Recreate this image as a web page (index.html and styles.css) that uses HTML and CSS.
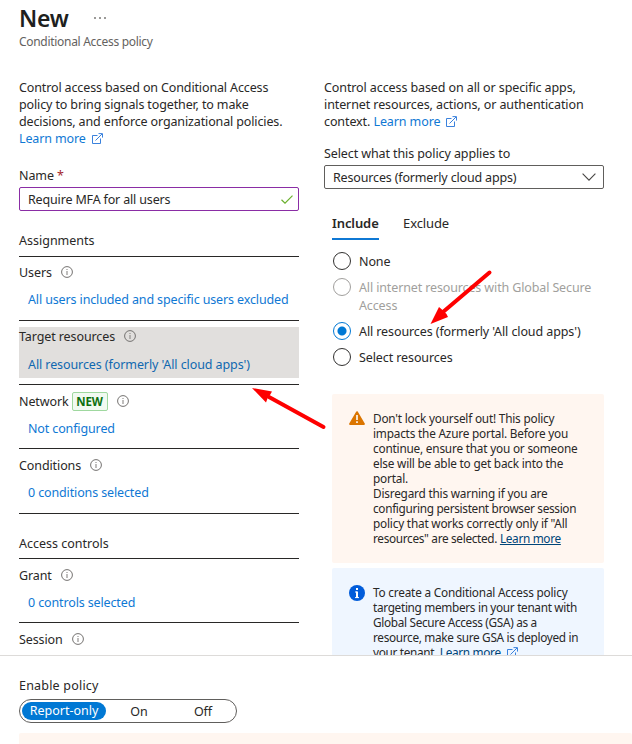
FILE: index.html
```html
<!DOCTYPE html>
<html lang="en">
<head>
<meta charset="utf-8">
<title>New - Conditional Access policy</title>
<link rel="stylesheet" href="styles.css">
</head>
<body>
<svg class="defs" width="0" height="0">
  <symbol id="info" viewBox="0 0 12 12"><circle cx="6" cy="6" r="5.4" fill="none" stroke="#747270" stroke-width="1"/><path d="M6 5v4M6 3v1.1" stroke="#8a8886" stroke-width="1.1"/></symbol>
  <symbol id="ext" viewBox="0 0 11 11"><path d="M5.5 2.5h-5v8h8v-5M3.5 7.5 10 1M6.5 .6h4v4" fill="none" stroke="#3b82dd" stroke-width="1"/></symbol>
</svg>
<div class="page">
  <header class="header">
    <div class="title-row"><h1>New</h1><span class="dots"><i></i><i></i><i></i></span></div>
    <div class="subtitle">Conditional Access policy</div>
  </header>
  <main class="columns">
    <section class="left">
      <p class="intro">Control access based on Conditional Access<br>policy to bring signals together, to make<br>decisions, and enforce organizational policies.<br><a>Learn more</a><svg class="ext"><use href="#ext"/></svg></p>
      <div class="label name-label">Name <span class="req">*</span></div>
      <div class="input"><span>Require MFA for all users</span><svg width="12" height="9" viewBox="0 0 12 9"><path d="M.5 4.8 4 8.2 11.5.7" fill="none" stroke="#6bb02e" stroke-width="1.2"/></svg></div>
      <h2>Assignments</h2>
      <div class="row first"><div class="head">Users<svg class="info"><use href="#info"/></svg></div><a>All users included and specific users excluded</a></div>
      <div class="row active"><div class="fill"><div class="head">Target resources<svg class="info"><use href="#info"/></svg></div><a>All resources (formerly 'All cloud apps')</a></div></div>
      <div class="row"><div class="head">Network<b class="new">NEW</b><svg class="info"><use href="#info"/></svg></div><a>Not configured</a></div>
      <div class="row last"><div class="head">Conditions<svg class="info"><use href="#info"/></svg></div><a>0 conditions selected</a></div>
      <h2 class="controls">Access controls</h2>
      <div class="row"><div class="head">Grant<svg class="info"><use href="#info"/></svg></div><a>0 controls selected</a></div>
      <div class="row"><div class="head">Session<svg class="info"><use href="#info"/></svg></div></div>
    </section>
    <section class="right">
      <p class="intro">Control access based on all or specific apps,<br>internet resources, actions, or authentication<br>context. <a>Learn more</a><svg class="ext"><use href="#ext"/></svg></p>
      <div class="label select-label">Select what this policy applies to</div>
      <div class="select"><span>Resources (formerly cloud apps)</span><svg width="14" height="8" viewBox="0 0 14 8"><path d="M.6.7 7 7.1 13.4.7" fill="none" stroke="#484644" stroke-width="1.1"/></svg></div>
      <div class="tabs"><div class="tab on">Include</div><div class="tab">Exclude</div></div>
      <div class="radios">
        <div class="radio"><i></i><span>None</span></div>
        <div class="radio off"><i></i><span>All internet resources with Global Secure<br>Access</span></div>
        <div class="radio on"><i></i><span>All resources (formerly 'All cloud apps')</span></div>
        <div class="radio"><i></i><span>Select resources</span></div>
      </div>
      <div class="notice warn">
        <svg width="16" height="14" viewBox="0 0 16 14"><path d="M8 1.2 14.9 13H1.1z" fill="#db7500" stroke="#db7500" stroke-width="2" stroke-linejoin="round"/><path d="M8 4v5M8 10.3v1.7" stroke="#fff" stroke-width="1.6"/></svg>
        <p>Don't lock yourself out! This policy<br>impacts the Azure portal. Before you<br>continue, ensure that you or someone<br>else will be able to get back into the<br>portal.<br>Disregard this warning if you are<br><span class="tight">configuring persistent browser session</span><br>policy that works correctly only if "All<br><span class="tight">resources" are selected. <a>Learn more</a></span></p>
      </div>
      <div class="notice note">
        <svg width="16" height="16" viewBox="0 0 16 16"><circle cx="8" cy="8" r="8" fill="#015cda"/><path d="M8 6.5V13M8 3v2" stroke="#fff" stroke-width="2"/><path d="M6 7h2M6 12.6h4" stroke="#fff" stroke-width="1"/></svg>
        <p>To create a Conditional Access policy<br><span class="tight">targeting members in your tenant with<br>Global Secure Access (GSA) as a<br>resource, make sure GSA is deployed in<br>your tenant. <a>Learn more</a></span><svg class="ext"><use href="#ext"/></svg></p>
      </div>
    </section>
    <svg class="arrows" width="632" height="400" viewBox="0 70 632 400"><path d="M489.500 272.500 443 312M323.500 427 269 397" stroke="#fe0000" stroke-width="4" stroke-linecap="round"/><path d="M430.500 324l8.500-17 3.500 3 4 4 1.500 3zM252 388l20 3.500-2 3.500-2.500 3.500-1.500 4z" fill="#fe0000"/></svg>
  </main>
  <footer class="footer">
    <div class="label enable">Enable policy</div>
    <div class="toggle"><span class="sel">Report-only</span><span class="t-on">On</span><span class="t-off">Off</span></div>
    <div class="strip"></div>
  </footer>
</div>
</body>
</html>
```
FILE: styles.css
```css
* { box-sizing: border-box; }
body { margin: 0; background: #fff; color: #292827; font: 12.5px/17px "Noto Sans", "Open Sans", sans-serif; letter-spacing: -.1px; white-space: nowrap; overflow: hidden; }
h1, h2, p { margin: 0; font-weight: 400; }
a { color: #0f78d4; }
.defs { display: none; }
.page { height: 744px; display: flex; flex-direction: column; }
.header { height: 70px; flex: none; padding: 4px 19px 0; }
.title-row { display: flex; gap: 26px; height: 28px; }
h1 { font: 600 23px/28px "Noto Sans", sans-serif; letter-spacing: -.3px; color: #201f1e; }
.dots { display: flex; gap: 3px; padding-top: 13px; }
.dots i { width: 2px; height: 2px; background: #7a7876; border-radius: 1px; }
.subtitle { color: #646260; font-size: 12px; letter-spacing: -.3px; line-height: 16px; margin-top: 2px; }
.columns { position: relative; flex: none; height: 585px; overflow: hidden; display: flex; gap: 25px; padding: 9px 28px 0 19px; }
.left, .right { width: 280px; flex: none; }
.left .intro { letter-spacing: -.13px; }
.ext { width: 11px; height: 11px; margin-left: 6px; vertical-align: -1px; }
.info { width: 12px; height: 12px; margin-left: 9px; }
.name-label { margin-top: 20px; }
.req { color: #a4262c; }
.input, .select { height: 24px; display: flex; align-items: center; justify-content: space-between; padding: 0 5px 0 8px; border: 1px solid #8a2da5; border-radius: 2px; letter-spacing: -.16px; }
.input { margin-top: 3px; }
h2 { font-size: 12.5px; line-height: 17px; letter-spacing: 0; margin-top: 21px; height: 24px; }
.row { height: 64px; border-top: 1px solid #292827; padding-top: 7px; }
.row > a, .fill > a { display: block; padding-left: 9px; letter-spacing: -.13px; }
.row > a { margin-top: 10px; }
.first { padding-top: 6px; }
.head { display: flex; align-items: center; height: 18px; }
.active { padding-top: 6px; }
.fill { background: #e1dfdd; height: 51px; }
.fill > a { color: #1068b0; padding-top: 11px; letter-spacing: -.09px; }
.new { border: 1px solid #9fd89f; background: #f1faf1; color: #0e700e; border-radius: 2px; width: 36px; height: 19px; line-height: 17px; text-align: center; margin-left: 3px; font-size: 11.5px; }
.last { height: 66px; border-bottom: 1px solid #292827; }
.controls { margin-top: 21px; height: 23px; }
.select-label { margin-top: 15px; }
.select { margin-top: 3px; border-color: #605e5c; padding-right: 7px; }
.tabs { display: flex; gap: 24px; padding-left: 8px; margin-top: 25px; height: 26px; font-size: 13px; }
.tab { height: 26px; padding-top: 1px; }
.tab.on { width: 47px; font-weight: 600; border-bottom: 2px solid #0f78d4; }
.radios { padding: 12px 0 0 9px; }
.radio { display: flex; gap: 8px; line-height: 18px; margin-bottom: 8px; }
.radio span { margin: 1px 0 -1px; }
.radio i { width: 18px; height: 18px; border: 1px solid #323130; border-radius: 50%; flex: none; }
.radio.off { color: #a19f9d; letter-spacing: -.13px; }
.radio.off i { border-color: #a19f9d; }
.radio.on i { border-color: #0078d4; background: radial-gradient(circle, #0078d4 4px, #fff 5px); }
.notice { margin-left: 8px; width: 272px; border-radius: 2px; display: flex; gap: 8px; padding: 17px 0 0 17px; font-size: 11.8px; line-height: 15px; letter-spacing: -.2px; }
.notice > svg { flex: none; }
.notice a { color: #004578; text-decoration: underline; }
.tight { letter-spacing: -.32px; }
.warn { margin-top: 28px; height: 169px; background: #fff6f0; }
.note { margin-top: 5px; height: 110px; background: #eff6ff; }
.arrows { position: absolute; left: 0; top: 0; }
.footer { flex: none; height: 89px; border-top: 1px solid #dddbd9; padding: 21px 0 0 19px; overflow: hidden; }
.enable { letter-spacing: .2px; }
.toggle { display: flex; align-items: center; width: 218px; height: 24px; margin-top: 5px; border: 1px solid #605e5c; border-radius: 12px; padding-left: 2px; }
.toggle span { text-align: center; }
.toggle .sel { width: 84px; height: 18px; line-height: 18px; border-radius: 9px; background: #0078d4; color: #fff; letter-spacing: 0; }
.t-on { width: 66px; }
.t-off { width: 62px; }
.strip { margin-top: 10px; height: 20px; background: #fff6f0; border-radius: 2px; }
```
